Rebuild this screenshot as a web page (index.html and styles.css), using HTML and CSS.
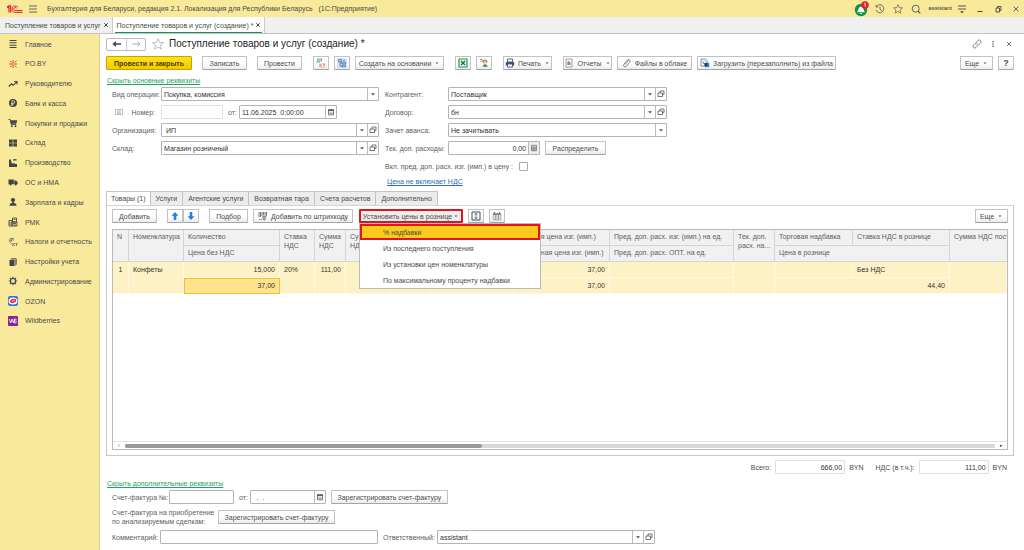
FILE: index.html
```
<!DOCTYPE html>
<html lang="ru">
<head>
<meta charset="utf-8">
<title>Поступление товаров и услуг (создание)</title>
<link rel="stylesheet" href="styles.css">
</head>
<body>
<svg class="sprite" aria-hidden="true">
  <symbol id="i-down" viewBox="0 0 8 8"><path d="M2 3.200h4L4 5.400z" fill="currentColor"/></symbol>
  <symbol id="i-open" viewBox="0 0 8 8"><path d="M3 1h4v3.500H6M3 1v2M1 3h4.500v3.500H1z" fill="none" stroke="currentColor" stroke-width=".8"/></symbol>
  <symbol id="i-cal" viewBox="0 0 8 8"><path d="M1.500 2h5v4.800h-5z" fill="none" stroke="currentColor" stroke-width=".8"/><path d="M1.100 1.300h5.800v1.600H1.100z" fill="currentColor"/><path d="M2.500 4.200h3M2.500 5.500h3" stroke="currentColor" stroke-width=".5"/></symbol>
  <symbol id="i-calc" viewBox="0 0 8 8"><path d="M1.500 1.300h5v5.500h-5zM1.500 3h5M1.500 5h5M3.200 3v3.800M4.900 3v3.800" fill="none" stroke="currentColor" stroke-width=".6"/></symbol>
  <symbol id="i-star" viewBox="0 0 12 12"><path d="M6 .8l1.500 3.600 3.900.3-3 2.500.9 3.800L6 8.900 2.700 11l.9-3.800-3-2.500 3.900-.3z" fill="none" stroke="currentColor" stroke-width=".8"/></symbol>
  <symbol id="i-x" viewBox="0 0 8 8"><path d="M2.200 2.200l3.600 3.600M5.800 2.200L2.200 5.800" stroke="currentColor" fill="none"/></symbol>
</svg>

<header class="topbar">
  <svg class="logo" viewBox="0 0 17 10"><path d="M1 3.300L3 1.800V8.500M4.700 1.200V8.500M1.500 3.800L3 2.800" fill="none" stroke="#d9252b" stroke-width="1.200"/><path d="M11.800 3.300A3.200 3.200 0 1 0 9.200 8.400H16.500M10.500 4.200A1.500 1.500 0 1 0 9.200 6.600H16.500" fill="none" stroke="#d9252b" stroke-width="1"/></svg>
  <svg class="ico" viewBox="0 0 10 10"><path d="M1 2h8M1 5h8M1 8h8" stroke="#555" stroke-width=".9"/></svg>
  <span class="app-title">Бухгалтерия для Беларуси, редакция 2.1. Локализация для Республики Беларусь &nbsp; (1С:Предприятие)</span>
  <div class="topbar-tools">
    <svg class="bell" viewBox="0 0 16 16"><circle cx="7" cy="9" r="6.200" fill="#119447"/><path d="M3 11.200c1.500-1 1-5 4-5.700 3 .7 2.500 4.700 4 5.700zM6 12h2v.8H6z" fill="#fff"/><circle cx="11" cy="4" r="3.800" fill="#e5202a"/><path d="M10 3.300l1.300-1v3.500" fill="none" stroke="#fff" stroke-width=".9"/></svg>
    <svg class="ico" viewBox="0 0 10 10"><path d="M1.500 2.500A4 4 0 1 1 1 5.800M1 .8v2.200h2.200M5 2.500v3l2 1" fill="none" stroke="#555" stroke-width=".8"/></svg>
    <svg class="ico"><use href="#i-star"/></svg>
    <svg class="ico" viewBox="0 0 10 10"><circle cx="4.700" cy="4.700" r="3.500" fill="none" stroke="#555" stroke-width=".9"/><path d="M7 7l2.300 2.300" stroke="#555" stroke-width="1.200"/></svg>
    <span class="user">assistant</span>
    <svg class="ico" viewBox="0 0 10 10"><path d="M1 2h8M1 5h8" stroke="#444" stroke-width=".9"/><path d="M3 7.200h4L5 9.200z" fill="#444"/></svg>
    <svg class="ico" viewBox="0 0 10 10"><path d="M2.500 7.500h5" stroke="#444"/></svg>
    <svg class="ico" viewBox="0 0 10 10"><path d="M3 4h3.500v4H3zM4.500 4V2.500H8v4H6.500" fill="none" stroke="#444" stroke-width=".9"/></svg>
    <svg class="ico" viewBox="0 0 10 10"><path d="M2.500 2.500l5 5M7.500 2.500l-5 5" stroke="#444" stroke-width=".8"/></svg>
  </div>
</header>

<nav class="windows">
  <a class="window" href="#">Поступление товаров и услуг <svg class="ico-s"><use href="#i-x"/></svg></a>
  <a class="window active" href="#"><span>Поступление товаров и услуг (создание) *</span> <svg class="ico-s"><use href="#i-x"/></svg></a>
</nav>

<div class="workspace">
<nav class="sidebar">
  <div class="sections">
    <a href="#"><svg viewBox="0 0 10 10"><path d="M1.500 1.500h7M1.500 3.800h7M1.500 6.200h7M1.500 8.500h7" stroke="#444" stroke-width="1.100"/></svg>Главное</a>
    <a href="#"><svg viewBox="0 0 10 10"><path d="M5 1v2.500M5 6.500V9M1 5h2.500M6.500 3.500L8.500 2M6.500 6.500l2 1.500M3.500 3.500L1.800 2M3.500 6.500L2 8.200M6.800 5H9" stroke="#dc4a3c" stroke-width="1"/><circle cx="5" cy="5" r="1.200" fill="none" stroke="#dc4a3c" stroke-width=".7"/></svg>PO.BY</a>
    <a href="#"><svg viewBox="0 0 10 10"><path d="M.8 7.500L3.500 4.800 5.300 6.300 8.700 2.800M6.300 2.500H9v2.700" fill="none" stroke="#444" stroke-width="1.200"/></svg>Руководителю</a>
    <a href="#"><svg viewBox="0 0 10 10"><circle cx="5" cy="5" r="4" fill="#444"/><path d="M4 8V2.800h1.500a1.200 1.200 0 0 1 0 2.600H3M3 6.700h2.500" fill="none" stroke="#f9e99b" stroke-width=".8"/></svg>Банк и касса</a>
    <a href="#"><svg viewBox="0 0 10 10"><path d="M.5 1.500h1.700l1 5h5" fill="none" stroke="#444" stroke-width=".9"/><path d="M2.300 2.300h7L8.300 5.800H3z" fill="#444"/><circle cx="3.800" cy="8.200" r="1" fill="#444"/><circle cx="7.500" cy="8.200" r="1" fill="#444"/></svg>Покупки и продажи</a>
    <a href="#"><svg viewBox="0 0 10 10"><path d="M1 1.500h3.700v3.200H1zM5.300 1.500H9v3.200H5.300zM1 5.300h3.700v3.200H1zM5.300 5.300H9v3.200H5.300z" fill="#444"/></svg>Склад</a>
    <a href="#"><svg viewBox="0 0 10 10"><path d="M1 9V1.500h2l.4 3.300L5.500 6V4.500L7.500 6h1.500v3zM5 1.500q2-1 3.700 0v1H5z" fill="#444"/></svg>Производство</a>
    <a href="#"><svg viewBox="0 0 10 10"><path d="M.5 2.500h5.300v4.700H.5zM6.200 3.500h1.900L9.600 5.200v2H6.200z" fill="#444"/><circle cx="2.500" cy="7.500" r="1" fill="#444"/><circle cx="7.700" cy="7.500" r="1" fill="#444"/></svg>ОС и НМА</a>
    <a href="#"><svg viewBox="0 0 10 10"><circle cx="5" cy="3" r="2.100" fill="#444"/><path d="M4.200 4.500h1.600v1.300q2.700.3 2.900 3H1.300q.2-2.700 2.900-3z" fill="#444"/></svg>Зарплата и кадры</a>
    <a href="#"><svg viewBox="0 0 10 10"><path d="M1 3.500h3V9H1zM4 5h5v4H4zM4.500 1h4v4h-4z" fill="none" stroke="#444" stroke-width=".9"/><path d="M5.500 2.500h2M5 6.500h3M5 8h3M2 5v3" stroke="#444" stroke-width=".8"/></svg>РМК</a>
    <a href="#"><svg viewBox="0 0 10 10"><path d="M1 4.200h3M1.400 4l.8-2.600h1.200V4M4 1.500h2M5 1.500v2.200M5 6v3M7 6L5.300 7.500 7 9M7.500 6.500h2M8.500 6.500V9M2.500 5.500l1.500 2" fill="none" stroke="#666" stroke-width=".8"/></svg>Налоги и отчетность</a>
    <a href="#"><svg viewBox="0 0 10 10"><path d="M1.500 3h5v6h-5z" fill="#444"/><path d="M2 2.500l1.500-1.300H8.700L7.200 2.500zM7.300 3l1.400-1.500v5.800L7.300 9z" fill="#555"/></svg>Настройки учета</a>
    <a href="#"><svg viewBox="0 0 10 10"><circle cx="5" cy="5" r="2.500" fill="none" stroke="#444" stroke-width="1.200"/><path d="M5 .8v1.500M5 7.700v1.500M.8 5h1.500M7.700 5h1.500M2 2l1 1M7 7l1 1M8 2L7 3M3 7L2 8" stroke="#444" stroke-width="1.200"/></svg>Администрирование</a>
    <a href="#"><svg viewBox="0 0 10 10"><rect width="10" height="10" rx="2" fill="#2876dc"/><ellipse cx="5" cy="5" rx="4.500" ry="3.500" fill="#fff"/><ellipse cx="5.100" cy="5" rx="2.500" ry="1.200" fill="#fff" stroke="#e52a4c" stroke-width="1.600" transform="rotate(-15 5 5)"/></svg>OZON</a>
    <a href="#"><svg viewBox="0 0 10 10"><rect width="10" height="10" rx="1" fill="#8a2397"/><path d="M1.300 3l1.400 4 1.400-4 1.300 4L6.800 3M6.200 3h1.600q1 1-.3 1.900 1.800 1 .2 2.100H6.500z" fill="none" stroke="#fff" stroke-width=".8"/></svg>Wildberries</a>
  </div>
</nav>

<main class="page">
  <div class="heading">
    <div class="history">
      <button aria-label="Назад"><svg class="ico" viewBox="0 0 10 10"><path d="M1.500 5H9M4 2.800L1.500 5 4 7.200" fill="none" stroke="#444" stroke-width="1.400"/></svg></button>
      <button aria-label="Вперед"><svg class="ico" viewBox="0 0 10 10"><path d="M1.500 5H9M6.500 2.800L9 5 6.500 7.200" fill="none" stroke="#aaa" stroke-width="1"/></svg></button>
    </div>
    <svg class="fav"><use href="#i-star"/></svg>
    <h1>Поступление товаров и услуг (создание) *</h1>
    <div class="heading-tools">
      <svg class="ico" viewBox="0 0 10 10"><path d="M4.300 3.200L6 1.500a1.700 1.700 0 0 1 2.500 2.500L6.800 5.700a1.700 1.700 0 0 1-2.300 0M5.700 6.800L4 8.500A1.700 1.700 0 0 1 1.500 6l1.700-1.700a1.700 1.700 0 0 1 2.300 0" fill="none" stroke="#666" stroke-width=".8"/></svg>
      <svg class="ico" viewBox="0 0 10 10"><path d="M5 2v1.300M5 4.400v1.300M5 6.800v1.300" stroke="#444" stroke-width="1.200"/></svg>
      <svg class="ico" viewBox="0 0 10 10"><path d="M3 3l4 4M7 3L3 7" stroke="#555" stroke-width=".8"/></svg>
    </div>
  </div>

  <div class="commands">
    <button class="btn primary w-86">Провести и закрыть</button>
    <button class="btn w-45">Записать</button>
    <button class="btn w-45">Провести</button>
    <div class="group">
      <button class="btn icon" aria-label="Дт Кт"><svg class="ico" viewBox="0 0 10 10"><path d="M.5 4h3.500M1 3.800l.7-3h1.500v3M4 1h2.400M5.200 1v3" stroke="#3b9c7d" fill="none" stroke-width=".8"/><path d="M4 5.500v4M6.200 5.500L4.300 7.500l2 2M6.700 6h2.800M8.100 6v3.500" stroke="#e36b51" fill="none" stroke-width=".8"/></svg></button>
      <button class="btn icon" aria-label="Структура подчиненности"><svg class="ico" viewBox="0 0 10 10"><path d="M.8.8h8.400v8.400H.8z" fill="#e3edf8" stroke="#8fb0d6" stroke-width=".5"/><path d="M1.500 1.500h3v2.200h-3zM3 4v4h2M3 5h2M5 4h3.500v2H5zM5 7h3.500v1.700H5zM6 2.500h2" fill="#b7d0ee" stroke="#3c6fae" stroke-width=".7"/></svg></button>
      <button class="btn w-89">Создать на основании <svg class="caret"><use href="#i-down"/></svg></button>
    </div>
    <div class="group">
      <button class="btn icon" aria-label="Excel"><svg class="ico" viewBox="0 0 10 10"><path d="M1 1h8v8H1z" fill="#eaf7ee" stroke="#219653" stroke-width="1.200"/><path d="M3 3l4 4M7 3L3 7" stroke="#17713b" stroke-width="1.400"/></svg></button>
      <button class="btn icon" aria-label="Цены"><svg class="ico" viewBox="0 0 10 10"><path d="M.8 1l2.700.6M1.500 3l2.500.3" stroke="#7d6a55" fill="none" stroke-width=".8"/><path d="M3.500 3.500q0-2 2.500-2t2.500 2l-1 1.800h-3z" fill="#b9854a"/><circle cx="6" cy="4" r="1.300" fill="#f3c79a"/><path d="M3.800 9q0-2.700 2.200-2.700T8.800 9z" fill="#46a45d"/><path d="M6 6.300v1.500" stroke="#d14b41"/></svg></button>
    </div>
    <button class="btn w-49 after-icons"><svg class="ico" viewBox="0 0 10 10"><path d="M.8 4h8.400v3.500H.8z" fill="#39577c"/><path d="M2.500 1h5v3h-5zM2.500 6h5v3h-5z" fill="#fff" stroke="#39577c" stroke-width=".9"/></svg> Печать <svg class="caret"><use href="#i-down"/></svg></button>
    <div class="group">
      <button class="btn w-49"><svg class="ico" viewBox="0 0 10 10"><path d="M2 1h6v8H2z" fill="#fff" stroke="#888" stroke-width=".8"/><path d="M4 3.500V7M6 4.500V7" stroke="#d34b45" stroke-width="1.100"/><path d="M5 3v4" stroke="#39577c" stroke-width=".8"/></svg> Отчеты <svg class="caret"><use href="#i-down"/></svg></button>
      <button class="btn w-75"><svg class="ico" viewBox="0 0 10 10"><path d="M3 6.500l3.500-4a1 1 0 0 1 1.600 1.300L4.200 8.300a1.500 1.500 0 0 1-2.400-2L5.500 2a2 2 0 0 1 1.500-.8" fill="none" stroke="#777" stroke-width=".9"/></svg> Файлы в облаке</button>
      <button class="btn w-139"><svg class="ico" viewBox="0 0 10 10"><path d="M1 1h4.500L7 2.500V8H1z" fill="#fff" stroke="#4b78aa" stroke-width=".8"/><path d="M2.500 3h3M5 5h4v4H5z" fill="#2e82cc" stroke="#2e82cc" stroke-width=".5"/><path d="M2.500 4.500L6.500 7M6.500 5v2.200H4.300" stroke="#222" fill="none" stroke-width=".9"/></svg> Загрузить (перезаполнить) из файла</button>
    </div>
    <div class="group end">
      <button class="btn w-33">Еще <svg class="caret"><use href="#i-down"/></svg></button>
      <button class="btn icon help" aria-label="Справка">?</button>
    </div>
  </div>

  <a class="toggle" href="#">Скрыть основные реквизиты</a>

  <div class="form">
    <div class="fields">
      <label for="op">Вид операции:</label>
      <div class="box"><input id="op" value="Покупка, комиссия"><button aria-label="Выбрать"><svg><use href="#i-down"/></svg></button></div>

      <label for="num" class="num-label"><svg class="ico-s" viewBox="0 0 8 8"><path d="M.5 1.500h7v5h-7zM2 3h4M2 4.200h4M2 5.400h4" fill="none" stroke="#999" stroke-width=".6"/></svg>Номер:</label>
      <div class="line">
        <div class="box pale w-62"><input id="num"></div>
        <label for="date" class="from">от:</label>
        <div class="box w-98"><input id="date" value="11.06.2025  0:00:00"><button aria-label="Календарь"><svg><use href="#i-cal"/></svg></button></div>
      </div>

      <label for="org">Организация:</label>
      <div class="box"><input id="org" value=" ИП"><button aria-label="Выбрать"><svg><use href="#i-down"/></svg></button><button aria-label="Открыть"><svg><use href="#i-open"/></svg></button></div>

      <label for="wh">Склад:</label>
      <div class="box"><input id="wh" value="Магазин розничный"><button aria-label="Выбрать"><svg><use href="#i-down"/></svg></button><button aria-label="Открыть"><svg><use href="#i-open"/></svg></button></div>
    </div>

    <div class="fields wide">
      <label for="ca">Контрагент:</label>
      <div class="box"><input id="ca" value="Поставщик"><button aria-label="Выбрать"><svg><use href="#i-down"/></svg></button><button aria-label="Открыть"><svg><use href="#i-open"/></svg></button></div>
      <label for="dog">Договор:</label>
      <div class="box"><input id="dog" value="бн"><button aria-label="Выбрать"><svg><use href="#i-down"/></svg></button><button aria-label="Открыть"><svg><use href="#i-open"/></svg></button></div>
      <label for="adv">Зачет аванса:</label>
      <div class="box"><input id="adv" value="Не зачитывать"><button aria-label="Выбрать"><svg><use href="#i-down"/></svg></button></div>
      <label for="exp">Тек. доп. расходы:</label>
      <div class="line">
        <div class="box w-92"><input id="exp" class="num" value="0,00"><button class="calc" aria-label="Калькулятор"><svg><use href="#i-calc"/></svg></button></div>
        <button class="btn w-61">Распределить</button>
      </div>
      <div class="check"><label for="incl">Вкл. пред. доп. расх. изг. (имп.) в цену :</label><input type="checkbox" id="incl"></div>
      <a class="link" href="#">Цена не включает НДС</a>
    </div>
  </div>

  <div class="tabs">
    <button class="tab active">Товары (1)</button><button class="tab">Услуги</button><button class="tab">Агентские услуги</button><button class="tab">Возвратная тара</button><button class="tab">Счета расчетов</button><button class="tab">Дополнительно</button>
  </div>

  <section class="panel">
    <div class="commands">
      <button class="btn w-45">Добавить</button>
      <div class="pair">
        <button class="btn icon" aria-label="Вверх"><svg class="ico" viewBox="0 0 10 10"><path d="M5 1L8.500 4.800H6.300V9H3.700V4.800H1.500z" fill="#2f7ddd"/></svg></button><button class="btn icon" aria-label="Вниз"><svg class="ico" viewBox="0 0 10 10"><path d="M5 9L1.500 5.200h2.200V1h2.600v4.200h2.200z" fill="#2f7ddd"/></svg></button>
      </div>
      <div class="group">
        <button class="btn w-39">Подбор</button>
        <button class="btn w-100"><svg class="ico" viewBox="0 0 10 10"><path d="M1 1v5M2.500 1v5M4 1v4M5.500 1v3M7 1v3M8.500 1v4" stroke="#555" stroke-width=".8"/><path d="M1 8.500h3M4.500 5h3.500L7 9H5.500z" stroke="#777" fill="#aaa" stroke-width=".7"/></svg> Добавить по штрихкоду</button>
        <div class="dropdown">
          <button class="btn w-104 marked">Установить цены в рознице <svg class="caret"><use href="#i-down"/></svg></button>
          <div class="menu">
            <button class="marked">% надбавки</button>
            <button>Из последнего поступления</button>
            <button>Из установки цен номенклатуры</button>
            <button>По максимальному проценту надбавки</button>
          </div>
        </div>
        <button class="btn icon" aria-label="Высота строк"><svg class="ico" viewBox="0 0 10 10"><path d="M1 1h8v8H1z" fill="none" stroke="#3e4f6b"/><path d="M5 2.300v5.400M3.700 3.600L5 2.200l1.300 1.400M3.700 6.400L5 7.800l1.300-1.400" fill="none" stroke="#3e4f6b" stroke-width=".8"/></svg></button>
        <button class="btn icon" aria-label="Колонки"><svg class="ico" viewBox="0 0 10 10"><path d="M1 3h2.500v6H1zM3.800 3h2.400v6H3.800zM6.500 3H9v6H6.500z" fill="#ddd" stroke="#888" stroke-width=".5"/><path d="M1 3h8M2.500 1v1.500M7.500 1v1.500" stroke="#555"/></svg></button>
      </div>
      <div class="group end"><button class="btn w-33">Еще <svg class="caret"><use href="#i-down"/></svg></button></div>
    </div>

    <div class="grid">
      <table>
        <colgroup><col class="c16"><col class="c55"><col class="c96"><col class="c35"><col class="c31"><col class="c45"><col class="c40"><col class="c83"><col class="c96"><col class="c124"><col class="c41"><col class="c78"><col class="c97"><col></colgroup>
        <thead>
          <tr><th rowspan="2">N</th><th rowspan="2">Номенклатура</th><th>Количество</th><th rowspan="2">Ставка<br>НДС</th><th rowspan="2">Сумма<br>НДС</th><th rowspan="2">Сумма<br>НДС</th><th rowspan="2"></th><th rowspan="2"></th><th>Учетная цена изг. (имп.)</th><th>Пред. доп. расх. изг. (имп.) на ед.</th><th rowspan="2">Тек. доп.<br>расх. на...</th><th>Торговая надбавка</th><th>Ставка НДС в рознице</th><th rowspan="2" class="last">Сумма НДС пост</th></tr>
          <tr><th>Цена без НДС</th><th>Розничная цена изг. (имп.)</th><th>Пред. доп. расх. ОПТ. на ед.</th><th colspan="2">Цена в рознице</th></tr>
        </thead>
        <tbody>
          <tr><td rowspan="2" class="mid">1</td><td rowspan="2">Конфеты</td><td class="num">15,000</td><td rowspan="2">20%</td><td rowspan="2" class="num">111,00</td><td rowspan="2"></td><td rowspan="2"></td><td rowspan="2"></td><td class="num">37,00</td><td></td><td rowspan="2"></td><td></td><td>Без НДС</td><td rowspan="2"></td></tr>
          <tr><td class="num current">37,00</td><td class="num">37,00</td><td></td><td colspan="2" class="num">44,40</td></tr>
        </tbody>
      </table>
      <div class="scroll"><span>‹</span><div class="track"><div class="thumb"></div></div><span class="on">▸</span></div>
    </div>
  </section>

  <div class="totals">
    <label for="sum">Всего:</label><div class="box pale w-70"><input id="sum" class="num" value="666,00"></div><span>BYN</span>
    <label for="vat" class="second">НДС (в т.ч.):</label><div class="box pale w-70"><input id="vat" class="num" value="111,00"></div><span>BYN</span>
  </div>

  <a class="toggle" href="#">Скрыть дополнительные реквизиты</a>

  <div class="extra">
    <div class="line">
      <div class="pair"><label for="sf" class="w-57">Счет-фактура №:</label><div class="box w-65"><input id="sf"></div></div>
      <label for="sfd" class="from">от:</label><div class="box w-76"><input id="sfd" value="  .  ."><button aria-label="Календарь"><svg><use href="#i-cal"/></svg></button></div>
      <button class="btn w-116">Зарегистрировать счет-фактуру</button>
    </div>
    <div class="line">
      <span class="w-101">Счет-фактура на приобретение<br>по анализируемым сделкам:</span><button class="btn w-116">Зарегистрировать счет-фактуру</button>
    </div>
    <div class="line">
      <div class="pair"><label for="com" class="w-48">Комментарий:</label><div class="box w-218"><input id="com"></div></div>
      <div class="pair"><label for="resp" class="w-54">Ответственный:</label><div class="box w-218"><input id="resp" value="assistant"><button aria-label="Выбрать"><svg><use href="#i-down"/></svg></button><button aria-label="Открыть"><svg><use href="#i-open"/></svg></button></div></div>
    </div>
  </div>
</main>
</div>
</body>
</html>
```

FILE: styles.css
```
* { box-sizing: border-box; }

body {
  margin: 0;
  min-height: 100vh;
  display: flex;
  flex-direction: column;
  font: 7px/9px "Liberation Sans", Arial, sans-serif;
  color: #4a4a4a;
  background: #fff;
}

button, input { font: inherit; color: inherit; margin: 0; padding: 0; }
a { color: inherit; text-decoration: none; }
svg { display: block; flex: none; }
.sprite { position: absolute; width: 0; height: 0; }
.ico { width: 10px; height: 10px; }
.ico-s { width: 8px; height: 8px; }

/* Application bar */
.topbar {
  display: flex;
  align-items: center;
  height: 17px;
  padding: 0 3px 0 6px;
  background: #f9e99b;
}
.logo { width: 17px; height: 10px; margin-right: 5px; }
.app-title { margin-left: 9px; white-space: nowrap; }
.topbar-tools { margin-left: auto; display: flex; align-items: center; gap: 8px; color: #555; }
.bell { width: 16px; height: 16px; margin-right: -3px; }
.user { margin: 0 -3px 0 -1px; color: #333; font-size: 6px; }

/* Open windows */
.windows {
  display: flex;
  height: 17px;
  background: #f0f0f0;
  border-bottom: 1px solid #c4c4c4;
}
.window {
  display: flex;
  align-items: center;
  gap: 1px;
  padding: 0 2px 0 5px;
  border-right: 1px solid #ccc;
  white-space: nowrap;
}
.window.active { position: relative; padding-left: 4px; background: #fff; }
.window.active::after {
  content: "";
  position: absolute;
  left: 2px;
  right: 2px;
  bottom: 0;
  height: 1px;
  background: #0a9a4f;
}

.workspace { flex: 1; display: flex; }

/* Sections */
.sidebar { width: 100px; flex: none; background: #f9e99b; border-right: 1px solid #d8cd94; }
.sections {
  display: flex;
  flex-direction: column;
  justify-content: space-between;
  height: 289px;
  margin-top: 4px;
}
.sections a { display: flex; align-items: center; gap: 7px; height: 12px; padding-left: 8px; white-space: nowrap; }
.sections svg { width: 10px; height: 10px; }

/* Document */
.page { flex: 1; min-width: 0; display: flex; flex-direction: column; padding: 3px 10px 6px 6px; }

.heading { display: flex; align-items: center; height: 14px; }
.history { display: flex; height: 13px; border: 1px solid #bbb; border-radius: 2px; }
.history button { width: 19px; border: 0; background: none; display: flex; align-items: center; justify-content: center; }
.history button + button { border-left: 1px solid #ccc; }
.fav { width: 12px; height: 12px; margin: 0 5px 0 6px; color: #aaa; }
h1 { margin: 0; font-size: 10px; line-height: 14px; font-weight: 400; color: #222; white-space: nowrap; }
.heading-tools { margin-left: auto; display: flex; gap: 6px; }

.commands { display: flex; align-items: center; gap: 10px; }
.page > .commands { margin-top: 5px; }
.page > .commands > .group:not(.end), .after-icons { margin-left: 1px; }
.group { display: flex; gap: 5px; }
.group.end { margin-left: auto; }
.pair { display: flex; align-items: center; }

.btn {
  display: flex;
  align-items: center;
  justify-content: center;
  gap: 3px;
  height: 14px;
  flex: none;
  border: 1px solid #c2c2c2;
  border-bottom-color: #a4a4a4;
  border-radius: 1px;
  background: linear-gradient(#fff 50%, #ececec);
  white-space: nowrap;
}
.btn.icon { width: 16px; }
.btn.primary { background: linear-gradient(#ffe11c, #f3cb00); border-color: #c8a400; font-weight: 700; color: #4a3f00; }
.btn.help { font-size: 9px; font-weight: 700; }
.caret { width: 6px; height: 6px; }

.toggle { align-self: flex-start; margin: 6px 0 0 1px; color: #1fa463; text-decoration: underline; }
.totals + .toggle { margin-top: 5px; }

/* Fields */
.form { display: flex; gap: 6px; margin: 2px 0 0 6px; }
.fields { display: grid; grid-template-columns: 49px 218px; grid-auto-rows: 14px; row-gap: 4px; align-items: center; align-content: start; }
.fields.wide { grid-template-columns: 63px 219px; }
.fields label, .extra label, .extra span { white-space: nowrap; color: #606060; }
.num-label { display: flex; justify-content: space-between; padding: 0 6px 0 3px; }
.line { display: flex; align-items: center; gap: 5px; }
.from { margin-right: -3px; }

.box { display: flex; height: 14px; border: 1px solid #b4b4b4; border-radius: 1px; background: #fff; }
.box.pale { border-color: #ddd; }
.box input { flex: 1; min-width: 0; width: 0; border: 0; padding: 0 2px; background: none; color: #333; white-space: pre; }
.box button { width: 11px; flex: none; border: 0; border-left: 1px solid #bbb; background: none; color: #555; display: flex; align-items: center; justify-content: center; }
.box button svg { width: 8px; height: 8px; }
.box .calc { background: #eee; }
.num { text-align: right; }

.check { grid-column: 1 / -1; display: flex; align-items: center; gap: 6px; }
.check input { appearance: none; width: 9px; height: 9px; border: 1px solid #aaa; border-radius: 1px; background: #fff; }
.link { grid-column: 1 / -1; justify-self: start; margin-left: 2px; line-height: 9px; align-self: start; color: #2d6db5; text-decoration: underline; }

/* Tabs and goods table */
.tabs { display: flex; height: 14px; }
.tab { border: 1px solid #c4c4c4; border-left-width: 0; border-bottom: 0; padding: 0 5px; background: #ececec; white-space: nowrap; }
.tab:first-child { border-left-width: 1px; }
.tab.active { padding: 0 4px; background: #fff; }
.panel { flex: 1; display: flex; flex-direction: column; border: 1px solid #c9c9c9; border-top-color: #d4d4d4; padding: 3px 5px 5px; }

.dropdown { position: relative; margin-left: 1px; }
.btn.marked { border: 2px solid #e3141c; background: #eee; gap: 1px; }
.menu {
  position: absolute;
  z-index: 2;
  top: 14px;
  left: 0;
  width: 182px;
  background: #fff;
  border: 1px solid #bbb;
}
.menu button { display: block; width: 100%; height: 16px; border: 0; padding: 0 0 0 23px; background: none; text-align: left; white-space: nowrap; }
.menu .marked { padding-left: 21px; border: 2px solid #e3141c; background: #f9cb1d; }

.grid { flex: 1; display: flex; flex-direction: column; margin-top: 6px; border: 1px solid #b9b9b9; overflow: hidden; }
table { width: 100%; table-layout: fixed; border-collapse: separate; border-spacing: 0; }
th, td { height: 16px; padding: 3px 4px 0; vertical-align: top; text-align: left; font-weight: 400; overflow: hidden; white-space: nowrap; line-height: 9px; }
th { padding-top: 2px; background: #f1f1f1; border-right: 1px solid #d5d5d5; border-bottom: 1px solid #d5d5d5; color: #606060; }
th.last { padding-right: 0; border-right: 0; }
td { background: #fdf1c6; border-right: 1px solid #fff9e3; border-bottom: 1px solid #fff9e3; color: #333; }
td.num { text-align: right; }
td.mid { text-align: center; }
td.current { padding-top: 2px; background: #ffe28c; border: 1px solid #efc232; }
.c16 { width: 16px; } .c31 { width: 31px; } .c35 { width: 35px; } .c40 { width: 40px; }
.c41 { width: 41px; } .c45 { width: 45px; } .c55 { width: 55px; } .c78 { width: 78px; }
.c83 { width: 83px; } .c96 { width: 96px; } .c97 { width: 97px; } .c124 { width: 124px; }

.scroll { display: flex; align-items: center; height: 8px; margin-top: auto; border-top: 1px solid #e3e3e3; color: #999; }
.scroll span { width: 12px; text-align: center; line-height: 7px; }
.scroll .on { color: #444; font-size: 5px; }
.track { flex: 1; height: 4px; background: #d8d8d8; }
.thumb { width: 41%; height: 4px; border-radius: 2px; background: #999; }

/* Totals and footer */
.totals { display: flex; align-items: center; justify-content: flex-end; gap: 4px; margin: 4px 7px 0 0; }
.totals .second { margin-left: 8px; }
.extra { display: flex; flex-direction: column; gap: 4px; margin: 2px 0 0 6px; }

.w-33 { width: 33px; } .w-39 { width: 39px; } .w-45 { width: 45px; } .w-48 { width: 48px; }
.w-49 { width: 49px; } .w-54 { width: 54px; } .w-57 { width: 57px; } .w-61 { width: 61px; }
.w-62 { width: 62px; } .w-65 { width: 65px; } .w-70 { width: 70px; } .w-75 { width: 75px; }
.w-76 { width: 76px; } .w-86 { width: 86px; } .w-89 { width: 89px; } .w-92 { width: 92px; }
.w-98 { width: 98px; } .w-100 { width: 100px; } .w-101 { width: 101px; } .w-104 { width: 104px; }
.w-116 { width: 117px; } .w-139 { width: 139px; } .w-218 { width: 218px; }
```
